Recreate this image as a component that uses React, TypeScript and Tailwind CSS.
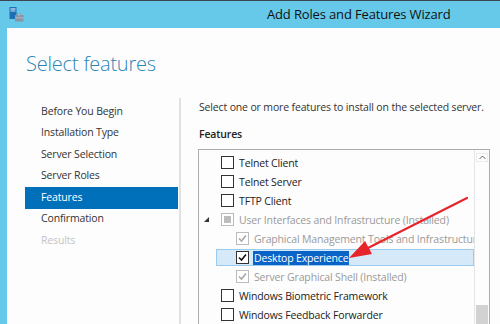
import React from "react";

type CheckState = "off" | "on" | "greyOn" | "greyMixed";

interface FeatureRow {
  label: string;
  level: 1 | 2;
  state: CheckState;
  expander?: boolean;
  selected?: boolean;
  muted?: boolean;
}

const steps = [
  { label: "Before You Begin" },
  { label: "Installation Type" },
  { label: "Server Selection" },
  { label: "Server Roles" },
  { label: "Features", active: true },
  { label: "Confirmation" },
  { label: "Results", disabled: true },
];

const rows: FeatureRow[] = [
  { label: "Telnet Client", level: 1, state: "off" },
  { label: "Telnet Server", level: 1, state: "off" },
  { label: "TFTP Client", level: 1, state: "off" },
  {
    label: "User Interfaces and Infrastructure (Installed)",
    level: 1,
    state: "greyMixed",
    expander: true,
    muted: true,
  },
  {
    label: "Graphical Management Tools and Infrastructure (Installed)",
    level: 2,
    state: "greyOn",
    muted: true,
  },
  { label: "Desktop Experience", level: 2, state: "on", selected: true },
  {
    label: "Server Graphical Shell (Installed)",
    level: 2,
    state: "greyOn",
    muted: true,
  },
  { label: "Windows Biometric Framework", level: 1, state: "off" },
  { label: "Windows Feedback Forwarder", level: 1, state: "off" },
];

// server tower + briefcase, as in the wizard title bar
const WizardIcon = () => (
  <svg width="16" height="16" viewBox="0 0 16 16">
    <rect x="0.5" y="0" width="7" height="12" fill="#1f6fb5" />
    <rect x="1.5" y="1.5" width="5" height="1" fill="#ffffff" />
    <rect x="1.5" y="3.5" width="5" height="1" fill="#bfe0f5" />
    <path d="M6 8 h2 v-1.5 h4 v1.5 h2.5 v6.5 h-8.5 z" fill="#8796a5" />
    <rect x="8.8" y="7.2" width="2.4" height="1" fill="#c9d3dc" />
    <rect x="6" y="10.5" width="8.5" height="0.8" fill="#b8c4cf" />
  </svg>
);

const Checkbox = ({ state }: { state: CheckState }) => {
  const grey = state === "greyOn" || state === "greyMixed";
  return (
    <span
      className={`w-[13px] h-[13px] shrink-0 border flex items-center justify-center bg-white ${
        grey ? "border-[#bcbcbc]" : "border-[#333333]"
      }`}
    >
      {state === "greyMixed" && <span className="w-[7px] h-[7px] bg-[#bcbcbc]" />}
      {(state === "on" || state === "greyOn") && (
        <svg width="11" height="11" viewBox="0 0 11 11">
          <path
            d="M2 5.5 L4.5 8 L9 2.5"
            fill="none"
            stroke={state === "on" ? "#111111" : "#a8a8a8"}
            strokeWidth="1.6"
          />
        </svg>
      )}
    </span>
  );
};

const Row = ({ row }: { row: FeatureRow }) => (
  <div className="h-[19px] relative flex items-center whitespace-nowrap">
    {row.selected && (
      <div className="absolute left-[17px] right-0 top-[0.5px] bottom-[1.5px] bg-[#d6e9f9] border border-[#9ccbf0]" />
    )}
    {row.expander && (
      <svg className="absolute left-[5px] top-[7px]" width="5" height="5" viewBox="0 0 5 5">
        <polygon points="5,0 5,5 0,5" fill="#333333" />
      </svg>
    )}
    <div
      className={`relative flex items-center gap-[5px] ${
        row.level === 1 ? "pl-[22px]" : "pl-[37px]"
      }`}
    >
      <Checkbox state={row.state} />
      <span
        className={`leading-[14px] ${
          row.selected
            ? "bg-[#0a64c8] text-white px-[1px] -ml-[1px]"
            : row.muted
              ? "text-[#9a9a9a]"
              : "text-[#222222]"
        }`}
      >
        {row.label}
      </span>
    </div>
  </div>
);

export default function App() {
  return (
    <div className="w-[500px] h-[324px] overflow-hidden relative bg-[#66c9ea] border-t border-[#3c4650] font-['Open_Sans',sans-serif]">
      {/* title bar */}
      <div className="h-[27px] flex items-center relative">
        <div className="pl-[9px] pt-[1px]">
          <WizardIcon />
        </div>
        <span className="absolute left-[267px] top-[4px] text-[13px] tracking-[-0.15px] text-[#111111] leading-[18px]">
          Add Roles and Features Wizard
        </span>
      </div>

      {/* window body */}
      <div className="ml-[7px] bg-[#fdfdfd] h-[296px] flex flex-col">
        <div className="h-[70px] pl-[19px] pt-[22px]">
          <h1 className="text-[20px] tracking-[-0.2px] font-light text-[#2a85b4] leading-[28px]">
            Select features
          </h1>
        </div>

        <div className="flex flex-1 min-h-0 text-[10.5px] tracking-[-0.15px]">
          {/* steps */}
          <div className="w-[174px] shrink-0 pl-[18px] pr-[1px] pt-[3px] border-r-2 border-[#e1e1e1]">
            {steps.map((s) => (
              <div
                key={s.label}
                className={`h-[21.5px] flex items-center pl-[16px] whitespace-nowrap ${
                  s.active
                    ? "bg-[#0070bb] text-white"
                    : s.disabled
                      ? "text-[#c4c4c4]"
                      : "text-[#333333]"
                }`}
              >
                {s.label}
              </div>
            ))}
          </div>

          {/* content */}
          <div className="flex-1 min-w-0 pl-[17px] pr-[10px] pt-[1px] text-[#333333]">
            <p className="leading-[16px] pl-[1px] whitespace-nowrap">
              Select one or more features to install on the selected server.
            </p>
            <p className="mt-[11px] leading-[16px] font-semibold pl-[1px] text-[#222222]">
              Features
            </p>
            <div className="mt-[7px] h-[200px] border border-[#acacac] flex">
              <div className="flex-1 min-w-0 overflow-hidden pt-[3px]">
                {rows.map((r) => (
                  <Row key={r.label} row={r} />
                ))}
              </div>
              <div className="w-[15px] shrink-0 border-l border-[#e6e6e6] flex flex-col">
                <div className="h-[12px] mt-[3px] mx-[1px] border border-[#ececec] flex items-center justify-center">
                  <svg width="7" height="5" viewBox="0 0 7 5">
                    <path d="M0.5 4 L3.5 1 L6.5 4" fill="none" stroke="#606060" strokeWidth="1" />
                  </svg>
                </div>
                <div className="h-[60px] mt-[143px] mx-[1px] bg-[#d2d2d2]" />
              </div>
            </div>
          </div>
        </div>
      </div>

      {/* red annotation arrow */}
      <svg className="absolute left-0 top-0 pointer-events-none" width="500" height="324" viewBox="0 0 500 324">
        <line x1="467" y1="197" x2="366" y2="248" stroke="#e8242b" strokeWidth="2.2" strokeLinecap="round" />
        <polygon points="349,257 372,253 365,240" fill="#e8242b" />
      </svg>
    </div>
  );
}
